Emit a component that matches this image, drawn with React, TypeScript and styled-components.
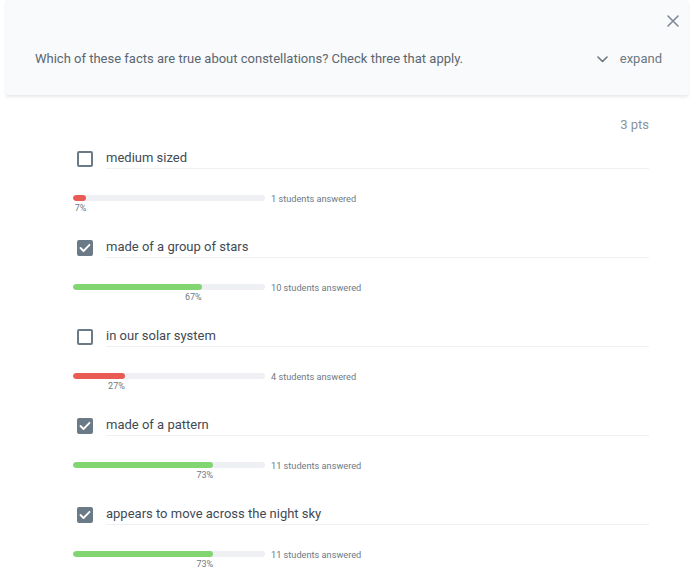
import styled, { createGlobalStyle } from "styled-components";

const GlobalStyle = createGlobalStyle`
    html, body {
        margin: 0;
        padding: 0;
        background: #ffffff;
        font-family: Roboto, "Liberation Sans", Arial, sans-serif;
    }
`

type Answer = {
    label: string;
    checked: boolean;
    count: number;
    percent: number;
}

const answers: Answer[] = [
    { label: "medium sized", checked: false, count: 1, percent: 7 },
    { label: "made of a group of stars", checked: true, count: 10, percent: 67 },
    { label: "in our solar system", checked: false, count: 4, percent: 27 },
    { label: "made of a pattern", checked: true, count: 11, percent: 73 },
    { label: "appears to move across the night sky", checked: true, count: 11, percent: 73 },
]

const App = () => {
    return (
        <>
            <GlobalStyle />
            <Page>
                <Header>
                    <CloseRow>
                        <CloseButton aria-label="close">
                            <svg width="12" height="12" viewBox="0 0 12 12">
                                <path d="M1 1 L11 11 M11 1 L1 11" stroke="#7d8a96" strokeWidth="1.6" strokeLinecap="round" />
                            </svg>
                        </CloseButton>
                    </CloseRow>
                    <QuestionRow>
                        <Question>Which of these facts are true about constellations? Check three that apply.</Question>
                        <Expand>
                            <svg width="11" height="7" viewBox="0 0 11 7">
                                <path d="M1 1 L5.5 5.5 L10 1" stroke="#6b7882" strokeWidth="1.6" fill="none" strokeLinecap="round" strokeLinejoin="round" />
                            </svg>
                            expand
                        </Expand>
                    </QuestionRow>
                </Header>
                <Content>
                    <Points>3 pts</Points>
                    {answers.map((a) => (
                        <AnswerBlock key={a.label}>
                            <OptionRow>
                                <Checkbox $checked={a.checked}>
                                    {a.checked && (
                                        <svg width="12" height="10" viewBox="0 0 12 10">
                                            <path d="M1.5 5 L4.5 8 L10.5 1.8" stroke="#ffffff" strokeWidth="1.8" fill="none" strokeLinecap="round" strokeLinejoin="round" />
                                        </svg>
                                    )}
                                </Checkbox>
                                <OptionLabel>{a.label}</OptionLabel>
                            </OptionRow>
                            <StatRow>
                                <BarColumn>
                                    <Track>
                                        <Fill $correct={a.checked} style={{ width: `${a.percent}%` }} />
                                    </Track>
                                    <PercentHolder style={{ width: `${a.percent}%` }}>
                                        <Percent>{a.percent}%</Percent>
                                    </PercentHolder>
                                </BarColumn>
                                <StatText>{a.count} students answered</StatText>
                            </StatRow>
                        </AnswerBlock>
                    ))}
                </Content>
            </Page>
        </>
    )
}

export default App;

const Page = styled.div`
    width: 700px;
    min-height: 587px;
    background: #ffffff;
    overflow: hidden;
`

const Header = styled.div`
    display: flex;
    flex-direction: column;
    box-sizing: border-box;
    height: 95px;
    margin: 0 12px 0 6px;
    padding: 15px 9px 0 29px;
    background: #f8fafc;
    box-shadow: 0 2px 3px rgba(0, 0, 0, 0.09);
`

const CloseRow = styled.div`
    display: flex;
    justify-content: flex-end;
    height: 12px;
`

const CloseButton = styled.button`
    display: flex;
    padding: 0;
    border: none;
    background: none;
    cursor: pointer;
`

const QuestionRow = styled.div`
    display: flex;
    justify-content: space-between;
    align-items: center;
    margin-top: 24px;
    padding-right: 17px;
    line-height: 16px;
`

const Question = styled.div`
    font-size: 13px;
    color: #5b6670;
`

const Expand = styled.div`
    display: flex;
    align-items: center;
    gap: 12px;
    font-size: 13px;
    color: #6b7882;
`

const Content = styled.div`
    display: flex;
    flex-direction: column;
    padding: 22px 51px 0 73px;
`

const Points = styled.div`
    align-self: flex-end;
    font-size: 13px;
    line-height: 16px;
    color: #8795a1;
    margin-bottom: 15px;
`

const AnswerBlock = styled.div`
    display: flex;
    flex-direction: column;
    height: 89px;
`

const OptionRow = styled.div`
    display: flex;
    align-items: center;
    gap: 13px;
    padding-left: 4px;
`

const Checkbox = styled.div<{ $checked: boolean }>`
    display: flex;
    align-items: center;
    justify-content: center;
    box-sizing: border-box;
    width: 16px;
    height: 16px;
    flex-shrink: 0;
    border-radius: 2px;
    border: 2px solid #6b7a87;
    background: ${(p) => (p.$checked ? "#6b7a87" : "#ffffff")};
`

const OptionLabel = styled.div`
    flex: 1;
    font-size: 13px;
    line-height: 20px;
    color: #3f4a54;
    border-bottom: 1px solid #eef0f2;
`

const StatRow = styled.div`
    display: flex;
    align-items: flex-start;
    gap: 6px;
    margin-top: 26px;
`

const BarColumn = styled.div`
    display: flex;
    flex-direction: column;
    width: 192px;
`

const Track = styled.div`
    height: 6px;
    border-radius: 3px;
    background: #eef0f3;
    overflow: hidden;
`

const Fill = styled.div<{ $correct: boolean }>`
    height: 100%;
    border-radius: 3px;
    background: ${(p) => (p.$correct ? "#82d672" : "#ea5b56")};
`

const PercentHolder = styled.div`
    display: flex;
    justify-content: flex-end;
    margin-top: 2px;
`

const Percent = styled.span`
    font-size: 9px;
    line-height: 11px;
    color: #6e7a84;
    white-space: nowrap;
`

const StatText = styled.div`
    font-size: 9.2px;
    line-height: 11px;
    margin-top: -2.5px;
    color: #6e7a84;
`
